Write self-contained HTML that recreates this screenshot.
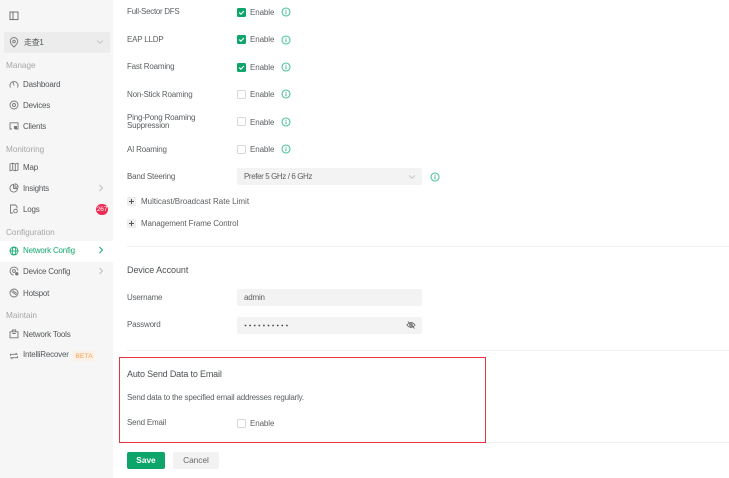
<!DOCTYPE html>
<html><head><meta charset="utf-8">
<style>
html,body{margin:0;padding:0;width:729px;height:478px;overflow:hidden;background:#fff;font-family:"Liberation Sans","Noto Sans CJK SC",sans-serif;color:#555;}
.t{position:absolute;margin-top:1px;font-size:8px;letter-spacing:-.2px;line-height:10px;white-space:nowrap;color:#5c6063;}
.h{margin-top:0;}
.sec{color:#a3a6a8;font-size:8.2px;letter-spacing:0;}
.nav{color:#54585b;}
.side{position:absolute;left:0;top:0;width:113px;height:478px;background:#f6f6f6;}
.abs{position:absolute;}
.cb{position:absolute;left:237px;width:9px;height:9px;border-radius:1.5px;background:#0ea56b;}
.cb.off{width:7px;height:7px;background:#fff;border:1px solid #d8d8d8;}
.cb svg{position:absolute;left:0;top:0;}
.i{position:absolute;width:10px;height:10px;}
.ic{position:absolute;left:9px;width:10px;height:10px;}
.in{position:absolute;left:237px;width:185px;height:17px;background:#f3f3f3;border-radius:2px;}
.hr{position:absolute;height:1px;background:#f0f0f0;left:127px;width:602px;}
.plus{position:absolute;left:127px;width:9px;height:9px;background:#eee;border-radius:1px;}
</style></head><body>
<svg width="0" height="0" style="position:absolute"><defs>
<symbol id="info" viewBox="0 0 10 10"><circle cx="5" cy="5" r="4" fill="none" stroke="#4cc596" stroke-width="1.100"/><path d="M5 4.400V7.200M5 2.700v1" stroke="#3fb98a" stroke-width="1" fill="none"/></symbol>
<symbol id="chk" viewBox="0 0 9 9"><path d="M2.200 4.600 3.900 6.200 6.900 3" stroke="#fff" stroke-width="1.200" fill="none"/></symbol>
</defs></svg>

<div class="side"></div>
<div class="abs" style="left:0;top:241px;width:113px;height:21px;background:#fff"></div>

<svg class="abs" style="left:9px;top:11px" width="10" height="10" viewBox="0 0 10 10"><rect x="1" y="1" width="8" height="7.600" fill="none" stroke="#666" stroke-width=".9"/><path d="M4 1v7.600" stroke="#666" stroke-width=".9"/></svg>
<div class="abs" style="left:4px;top:32px;width:106px;height:21px;background:#ececec;border-radius:2px"></div>
<svg class="abs" style="left:9px;top:37px" width="10" height="11" viewBox="0 0 10 11"><path d="M5 10C2.500 7.600 1.200 6.200 1.200 4.400a3.800 3.800 0 0 1 7.600 0C8.800 6.200 7.500 7.600 5 10Z" fill="none" stroke="#777" stroke-width=".9"/><circle cx="5" cy="4.500" r="1.300" fill="none" stroke="#777" stroke-width=".9"/></svg>
<div class="t nav" style="left:24px;top:37px;letter-spacing:-.3px">走查1</div>
<svg class="abs" style="left:96px;top:39px" width="8" height="6" viewBox="0 0 8 6"><path d="M1 1.500 4 4.200 7 1.500" fill="none" stroke="#bbb" stroke-width=".8"/></svg>

<div class="t sec" style="left:6px;top:60px">Manage</div>
<svg class="ic" style="top:79px" viewBox="0 0 10 10"><path d="M1.500 8.500A4 4 0 1 1 8.500 8.500M5 6.500 4 3" fill="none" stroke="#777" stroke-width=".9"/></svg>
<div class="t nav" style="left:23px;top:79px">Dashboard</div>
<svg class="ic" style="top:100px" viewBox="0 0 10 10"><circle cx="5" cy="5" r="4" fill="none" stroke="#777" stroke-width=".9"/><circle cx="5" cy="5" r="1.500" fill="none" stroke="#777" stroke-width=".9"/></svg>
<div class="t nav" style="left:23px;top:100px">Devices</div>
<svg class="ic" style="top:121px" viewBox="0 0 10 10"><path d="M3 8H1V1.800H9V8H6" fill="none" stroke="#777" stroke-width=".9"/><rect x="5" y="5" width="3" height="3" fill="#777"/></svg>
<div class="t nav" style="left:23px;top:121px">Clients</div>

<div class="t sec" style="left:6px;top:144px">Monitoring</div>
<svg class="ic" style="top:162px" viewBox="0 0 10 10"><path d="M1 2 3.700 1.200 6.300 2 9 1.200V8L6.300 8.800 3.700 8 1 8.800ZM3.700 1.200V8M6.300 2V8.800" fill="none" stroke="#777" stroke-width=".9"/></svg>
<div class="t nav" style="left:23px;top:162px">Map</div>
<svg class="ic" style="top:183px" viewBox="0 0 10 10"><path d="M4.500 1.500a3.800 3.800 0 1 0 4 4H4.500ZM6 .8a3.300 3.300 0 0 1 3.200 3.200H6Z" fill="none" stroke="#777" stroke-width=".9"/></svg>
<div class="t nav" style="left:23px;top:183px">Insights</div>
<svg class="abs" style="left:98px;top:184px" width="6" height="8" viewBox="0 0 6 8"><path d="M1.500 1 4.500 4 1.500 7" fill="none" stroke="#bbb" stroke-width=".9"/></svg>
<svg class="ic" style="top:204px" viewBox="0 0 10 10"><path d="M4 9H1.500V1H6.500L8 2.500V4.500" fill="none" stroke="#777" stroke-width=".9"/><circle cx="6.500" cy="7" r="1.800" fill="none" stroke="#777" stroke-width=".9"/></svg>
<div class="t nav" style="left:23px;top:204px">Logs</div>
<div class="abs" style="left:96px;top:204px;width:12px;height:11px;border-radius:6px;background:#ee2b55;color:#fff;font-size:6.500px;letter-spacing:-.2px;line-height:11px;text-align:center">267</div>

<div class="t sec" style="left:6px;top:227px">Configuration</div>
<svg class="ic" style="top:246px" viewBox="0 0 10 10"><circle cx="5" cy="5" r="4" fill="none" stroke="#14a870" stroke-width=".9"/><ellipse cx="5" cy="5" rx="1.800" ry="4" fill="none" stroke="#14a870" stroke-width=".9"/><path d="M1 5H9" stroke="#14a870" stroke-width=".9"/></svg>
<div class="t" style="left:23px;top:245px;color:#14a870">Network Config</div>
<svg class="abs" style="left:98px;top:246px" width="6" height="8" viewBox="0 0 6 8"><path d="M1.500 1 4.500 4 1.500 7" fill="none" stroke="#14a870" stroke-width="1"/></svg>
<svg class="ic" style="top:266px" viewBox="0 0 10 10"><path d="M9 4.500A4 4 0 1 0 4.500 9" fill="none" stroke="#777" stroke-width=".9"/><circle cx="5" cy="5" r="1.400" fill="none" stroke="#777" stroke-width=".9"/><circle cx="7.800" cy="7.800" r="1.700" fill="#777"/></svg>
<div class="t nav" style="left:23px;top:266px">Device Config</div>
<svg class="abs" style="left:98px;top:267px" width="6" height="8" viewBox="0 0 6 8"><path d="M1.500 1 4.500 4 1.500 7" fill="none" stroke="#bbb" stroke-width=".9"/></svg>
<svg class="ic" style="top:288px" viewBox="0 0 10 10"><circle cx="5" cy="5" r="4" fill="none" stroke="#777" stroke-width=".9"/><path d="M2.500 3.500 7.500 7M3.500 2.500 8 5.500" stroke="#777" stroke-width=".9" fill="none"/></svg>
<div class="t nav" style="left:23px;top:288px">Hotspot</div>

<div class="t sec" style="left:6px;top:310px">Maintain</div>
<svg class="ic" style="top:329px" viewBox="0 0 10 10"><rect x="1" y="2.800" width="8" height="6" fill="none" stroke="#777" stroke-width=".9"/><path d="M3.300 2.800V1H6.700V2.800M3.300 4.500H6.700" fill="none" stroke="#777" stroke-width=".9"/></svg>
<div class="t nav" style="left:23px;top:329px">Network Tools</div>
<svg class="ic" style="top:351px" viewBox="0 0 10 10"><path d="M1.500 5V3.300H8L6.700 2M8.500 5V6.700H2L3.300 8" fill="none" stroke="#777" stroke-width=".9"/></svg>
<div class="t nav" style="left:23px;top:349px">IntelliRecover</div>
<div class="abs" style="left:73px;top:351px;width:22px;height:10px;background:#fdf0e4;color:#f5a35c;font-size:6.800px;line-height:11px;text-align:center;border-radius:1px">BETA</div>

<!-- rows -->
<div class="t" style="left:127px;top:6px;letter-spacing:-.3px">Full-Sector DFS</div>
<div class="cb" style="top:8px"><svg width="9" height="9"><use href="#chk"/></svg></div>
<div class="t" style="left:250px;top:7px;letter-spacing:-.1px">Enable</div>
<svg class="i" style="left:281px;top:7px"><use href="#info"/></svg>

<div class="t" style="left:127px;top:34px">EAP LLDP</div>
<div class="cb" style="top:35px"><svg width="9" height="9"><use href="#chk"/></svg></div>
<div class="t" style="left:250px;top:34px;letter-spacing:-.1px">Enable</div>
<svg class="i" style="left:281px;top:35px"><use href="#info"/></svg>

<div class="t" style="left:127px;top:61px">Fast Roaming</div>
<div class="cb" style="top:63px"><svg width="9" height="9"><use href="#chk"/></svg></div>
<div class="t" style="left:250px;top:62px;letter-spacing:-.1px">Enable</div>
<svg class="i" style="left:281px;top:62px"><use href="#info"/></svg>

<div class="t" style="left:127px;top:89px">Non-Stick Roaming</div>
<div class="cb off" style="top:90px"></div>
<div class="t" style="left:250px;top:89px;letter-spacing:-.1px">Enable</div>
<svg class="i" style="left:281px;top:89px"><use href="#info"/></svg>

<div class="t" style="left:127px;top:112px">Ping-Pong Roaming</div>
<div class="t" style="left:127px;top:120px">Suppression</div>
<div class="cb off" style="top:117px"></div>
<div class="t" style="left:250px;top:117px;letter-spacing:-.1px">Enable</div>
<svg class="i" style="left:281px;top:117px"><use href="#info"/></svg>

<div class="t" style="left:127px;top:144px">AI Roaming</div>
<div class="cb off" style="top:145px"></div>
<div class="t" style="left:250px;top:144px;letter-spacing:-.1px">Enable</div>
<svg class="i" style="left:281px;top:144px"><use href="#info"/></svg>

<div class="t" style="left:127px;top:171px">Band Steering</div>
<div class="in" style="top:168px"></div>
<div class="t" style="left:244px;top:171px;letter-spacing:-.4px">Prefer 5 GHz / 6 GHz</div>
<svg class="abs" style="left:408px;top:174px" width="8" height="6" viewBox="0 0 8 6"><path d="M1 1.500 4 4.200 7 1.500" fill="none" stroke="#bbb" stroke-width=".8"/></svg>
<svg class="i" style="left:430px;top:172px"><use href="#info"/></svg>

<div class="plus" style="top:197px"></div>
<svg class="abs" style="left:127px;top:197px" width="9" height="9"><path d="M2 4.500H7M4.500 2V7" stroke="#555" stroke-width="1"/></svg>
<div class="t" style="left:141px;top:196px;letter-spacing:0">Multicast/Broadcast Rate Limit</div>
<div class="plus" style="top:219px"></div>
<svg class="abs" style="left:127px;top:219px" width="9" height="9"><path d="M2 4.500H7M4.500 2V7" stroke="#555" stroke-width="1"/></svg>
<div class="t" style="left:141px;top:218px;letter-spacing:-.12px">Management Frame Control</div>

<div class="hr" style="top:246px"></div>

<div class="t h" style="left:127px;top:265px;font-size:9px;letter-spacing:-.05px;color:#4d5154">Device Account</div>
<div class="t" style="left:127px;top:292px">Username</div>
<div class="in" style="top:289px"></div>
<div class="t" style="left:244px;top:292px">admin</div>
<div class="t" style="left:127px;top:319px">Password</div>
<div class="in" style="top:317px"></div>
<svg class="abs" style="left:244px;top:323px" width="50" height="5"><g fill="#444"><circle cx="1.500" cy="2.500" r=".9"/><circle cx="6.100" cy="2.500" r=".9"/><circle cx="10.700" cy="2.500" r=".9"/><circle cx="15.300" cy="2.500" r=".9"/><circle cx="19.900" cy="2.500" r=".9"/><circle cx="24.500" cy="2.500" r=".9"/><circle cx="29.100" cy="2.500" r=".9"/><circle cx="33.700" cy="2.500" r=".9"/><circle cx="38.300" cy="2.500" r=".9"/><circle cx="42.900" cy="2.500" r=".9"/></g></svg>
<svg class="abs" style="left:406px;top:320px" width="10" height="10" viewBox="0 0 10 10"><path d="M1 5C3.500 1.800 6.500 1.800 9 5 6.500 8.200 3.500 8.200 1 5Z" fill="none" stroke="#666" stroke-width=".9"/><circle cx="5" cy="5" r="1.300" fill="none" stroke="#666" stroke-width=".9"/><path d="M2 1.500 8.500 8.500" stroke="#666" stroke-width=".9"/></svg>

<div class="hr" style="top:350px"></div>

<div class="abs" style="left:119px;top:357px;width:365px;height:84px;border:1px solid #e8323f"></div>
<div class="t h" style="left:127px;top:369px;font-size:9px;letter-spacing:-.17px;color:#4d5154">Auto Send Data to Email</div>
<div class="t" style="left:127px;top:392px">Send data to the specified email addresses regularly.</div>
<div class="t" style="left:127px;top:417px">Send Email</div>
<div class="cb off" style="top:419px"></div>
<div class="t" style="left:250px;top:418px;letter-spacing:-.1px">Enable</div>

<div class="hr" style="top:442px;left:486px;width:243px"></div>

<div class="abs" style="left:127px;top:452px;width:38px;height:17px;background:#0ea56b;border-radius:2px;color:#fff;font-size:8.300px;font-weight:bold;line-height:17px;text-align:center">Save</div>
<div class="abs" style="left:173px;top:452px;width:46px;height:17px;background:#f2f2f2;border-radius:2px;color:#666;font-size:8.300px;line-height:17px;text-align:center">Cancel</div>
</body></html>
